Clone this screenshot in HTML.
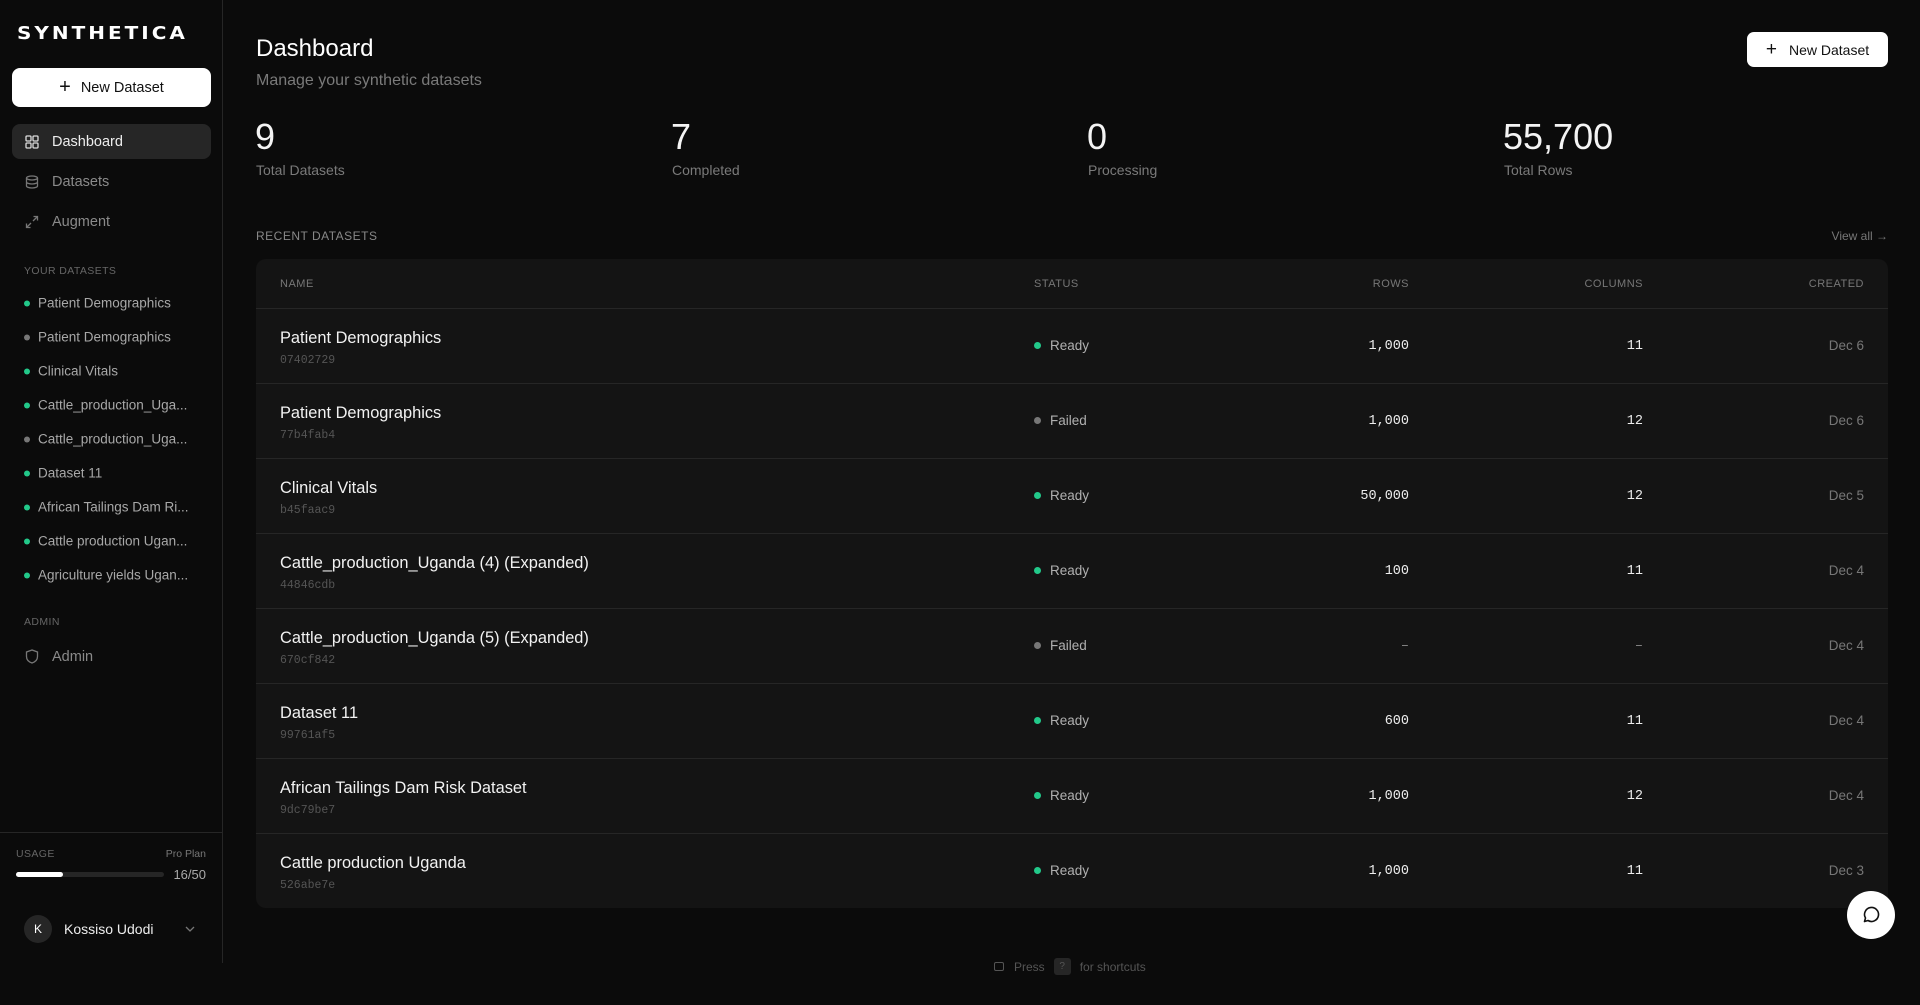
<!DOCTYPE html>
<html><head><meta charset="utf-8"><style>
*{box-sizing:border-box;margin:0;padding:0}
body{width:1920px;height:1005px;background:#0b0b0b;font-family:"Liberation Sans",sans-serif;color:#fff;position:relative;overflow:hidden}
.a{position:absolute;white-space:nowrap}
.sb{position:absolute;left:0;top:0;width:223px;height:963px;border-right:1px solid #262626}
.nav{position:absolute;left:12px;width:199px;height:35px;border-radius:8px;display:flex;align-items:center;padding-left:13px;font-size:14.5px;color:#8a8a8a}
.nav svg{margin-right:13px}
.ds{position:absolute;left:24px;font-size:13.5px;color:#a8a8a8;display:flex;align-items:center;transform:translateY(-50%)}
.dot{width:6px;height:6px;border-radius:50%;background:#22c98a;margin-right:8px}
.g{background:#777}
.lbl{font-size:10.5px;color:#666;letter-spacing:.4px}
.num{font-size:36px;color:#f4f4f4}
.sl{font-size:14px;color:#7a7a7a}
.tbl{position:absolute;left:256px;top:259px;width:1632px;height:649px;background:#141414;border-radius:10px;overflow:hidden}
.row{position:absolute;left:0;width:100%;height:75px;border-top:1px solid #262626}
.nm{position:absolute;left:24px;top:20px;font-size:16.4px;color:#f2f2f2}
.hs{position:absolute;left:24px;top:45px;font-size:11.5px;color:#555;font-family:"Liberation Mono",monospace}
.st{position:absolute;left:778px;top:29px;font-size:13.5px;color:#b0b0b0;display:flex;align-items:center}
.st .dot{width:7px;height:7px;margin-right:9px}
.r{position:absolute;right:479px;top:30px;font-family:"Liberation Mono",monospace;font-size:13.5px;color:#eee}
.c{position:absolute;right:245px;top:30px;font-family:"Liberation Mono",monospace;font-size:13.5px;color:#eee}
.d{position:absolute;right:24px;top:29px;font-size:13.5px;color:#777}
.th{position:absolute;top:19px;font-size:11px;color:#777;letter-spacing:.5px}
</style></head><body>
<div class="sb">
<div class="a" style="left:17px;top:22px;font-size:20px;font-weight:bold;letter-spacing:3px;font-family:'DejaVu Sans','Liberation Sans',sans-serif;transform:scaleY(0.9);transform-origin:left top">SYNTHETICA</div>
<div class="a" style="left:12px;top:68px;width:199px;height:39px;background:#fff;border-radius:8px;color:#111;font-size:14.5px;display:flex;align-items:center;justify-content:center"><span style="font-size:20px;margin-right:10px;font-weight:300">+</span>New Dataset</div>
<div class="nav" style="top:124px;background:#262626;color:#eee"><svg width="14" height="14" viewBox="0 0 14 14" fill="none" stroke="#ddd" stroke-width="1.3"><rect x="1" y="1" width="5" height="5" rx="1"/><rect x="8" y="1" width="5" height="5" rx="1"/><rect x="1" y="8" width="5" height="5" rx="1"/><rect x="8" y="8" width="5" height="5" rx="1"/></svg>Dashboard</div>
<div class="nav" style="top:164px"><svg width="14" height="14" viewBox="0 0 14 14" fill="none" stroke="#777" stroke-width="1.3"><ellipse cx="7" cy="3" rx="5.5" ry="2"/><path d="M1.5 3v8c0 1.1 2.5 2 5.5 2s5.5-.9 5.5-2V3M1.5 7c0 1.1 2.5 2 5.5 2s5.5-.9 5.5-2"/></svg>Datasets</div>
<div class="nav" style="top:204px"><svg width="14" height="14" viewBox="0 0 14 14" fill="none" stroke="#777" stroke-width="1.3"><path d="M8.5 1.5h4v4M12.5 1.5L8 6M5.5 12.5h-4v-4M1.5 12.5L6 8"/></svg>Augment</div>
<div class="a lbl" style="left:24px;top:265px">YOUR DATASETS</div>
<div class="ds" style="top:303px"><span class="dot"></span>Patient Demographics</div>
<div class="ds" style="top:337px"><span class="dot g"></span>Patient Demographics</div>
<div class="ds" style="top:371px"><span class="dot"></span>Clinical Vitals</div>
<div class="ds" style="top:405px"><span class="dot"></span>Cattle_production_Uga...</div>
<div class="ds" style="top:439px"><span class="dot g"></span>Cattle_production_Uga...</div>
<div class="ds" style="top:473px"><span class="dot"></span>Dataset 11</div>
<div class="ds" style="top:507px"><span class="dot"></span>African Tailings Dam Ri...</div>
<div class="ds" style="top:541px"><span class="dot"></span>Cattle production Ugan...</div>
<div class="ds" style="top:575px"><span class="dot"></span>Agriculture yields Ugan...</div>
<div class="a lbl" style="left:24px;top:616px">ADMIN</div>
<div class="nav" style="top:639px"><svg width="14" height="15" viewBox="0 0 14 15" fill="none" stroke="#777" stroke-width="1.3"><path d="M7 1L1.5 3v4.5C1.5 11 4 13 7 14c3-1 5.5-3 5.5-6.5V3z"/></svg>Admin</div>
<div class="a" style="left:0;top:832px;width:223px;border-top:1px solid #262626"></div>
<div class="a lbl" style="left:16px;top:848px">USAGE</div>
<div class="a" style="right:16px;top:848px;font-size:10.5px;color:#777">Pro Plan</div>
<div class="a" style="left:16px;top:872px;width:148px;height:5px;border-radius:3px;background:#262626"><div style="width:47px;height:5px;border-radius:3px;background:#fff"></div></div>
<div class="a" style="right:16px;top:867px;font-size:13px;color:#aaa">16/50</div>
<div class="a" style="left:24px;top:915px;width:28px;height:28px;border-radius:50%;background:#262626;font-size:12px;display:flex;align-items:center;justify-content:center">K</div>
<div class="a" style="left:64px;top:921px;font-size:14px;color:#eee">Kossiso Udodi</div>
<svg class="a" style="left:185px;top:925px" width="10" height="8" viewBox="0 0 10 8" fill="none" stroke="#777" stroke-width="1.3"><path d="M1 2l4 4 4-4"/></svg>
</div>

<div class="a" style="left:256px;top:35px;font-size:24px">Dashboard</div>
<div class="a" style="left:256px;top:72px;font-size:16px;color:#7a7a7a">Manage your synthetic datasets</div>
<div class="a" style="left:1747px;top:32px;width:141px;height:35px;background:#fff;border-radius:7px;color:#111;font-size:14px;display:flex;align-items:center;justify-content:center"><span style="font-size:19px;margin-right:12px;font-weight:300">+</span>New Dataset</div>

<div class="a num" style="left:255px;top:116px">9</div><div class="a sl" style="left:256px;top:162px">Total Datasets</div>
<div class="a num" style="left:671px;top:116px">7</div><div class="a sl" style="left:672px;top:162px">Completed</div>
<div class="a num" style="left:1087px;top:116px">0</div><div class="a sl" style="left:1088px;top:162px">Processing</div>
<div class="a num" style="left:1503px;top:116px">55,700</div><div class="a sl" style="left:1504px;top:162px">Total Rows</div>

<div class="a" style="left:256px;top:229px;font-size:12px;color:#888;letter-spacing:.5px">RECENT DATASETS</div>
<div class="a" style="right:32px;top:229px;font-size:12px;color:#777">View all →</div>

<div class="tbl">
<div class="th" style="left:24px">NAME</div><div class="th" style="left:778px">STATUS</div><div class="th" style="right:479px">ROWS</div><div class="th" style="right:245px">COLUMNS</div><div class="th" style="right:24px">CREATED</div>
<div class="row" style="top:49px"><div class="nm">Patient Demographics</div><div class="hs">07402729</div><div class="st"><span class="dot"></span>Ready</div><div class="r">1,000</div><div class="c">11</div><div class="d">Dec 6</div></div>
<div class="row" style="top:124px"><div class="nm">Patient Demographics</div><div class="hs">77b4fab4</div><div class="st"><span class="dot g"></span>Failed</div><div class="r">1,000</div><div class="c">12</div><div class="d">Dec 6</div></div>
<div class="row" style="top:199px"><div class="nm">Clinical Vitals</div><div class="hs">b45faac9</div><div class="st"><span class="dot"></span>Ready</div><div class="r">50,000</div><div class="c">12</div><div class="d">Dec 5</div></div>
<div class="row" style="top:274px"><div class="nm">Cattle_production_Uganda (4) (Expanded)</div><div class="hs">44846cdb</div><div class="st"><span class="dot"></span>Ready</div><div class="r">100</div><div class="c">11</div><div class="d">Dec 4</div></div>
<div class="row" style="top:349px"><div class="nm">Cattle_production_Uganda (5) (Expanded)</div><div class="hs">670cf842</div><div class="st"><span class="dot g"></span>Failed</div><div class="r" style="color:#888">–</div><div class="c" style="color:#888">–</div><div class="d">Dec 4</div></div>
<div class="row" style="top:424px"><div class="nm">Dataset 11</div><div class="hs">99761af5</div><div class="st"><span class="dot"></span>Ready</div><div class="r">600</div><div class="c">11</div><div class="d">Dec 4</div></div>
<div class="row" style="top:499px"><div class="nm">African Tailings Dam Risk Dataset</div><div class="hs">9dc79be7</div><div class="st"><span class="dot"></span>Ready</div><div class="r">1,000</div><div class="c">12</div><div class="d">Dec 4</div></div>
<div class="row" style="top:574px"><div class="nm">Cattle production Uganda</div><div class="hs">526abe7e</div><div class="st"><span class="dot"></span>Ready</div><div class="r">1,000</div><div class="c">11</div><div class="d">Dec 3</div></div>
</div>

<div class="a" style="left:994px;top:958px;font-size:12px;color:#555;display:flex;align-items:center"><span style="width:10px;height:9px;border:1.3px solid #555;border-radius:2px;margin-right:10px"></span>Press<span style="background:#262626;border-radius:3px;width:17px;height:17px;display:inline-flex;align-items:center;justify-content:center;margin:0 9px;font-size:10px">?</span>for shortcuts</div>

<div class="a" style="left:1847px;top:891px;width:48px;height:48px;border-radius:50%;background:#fff;display:flex;align-items:center;justify-content:center"><svg width="20" height="20" viewBox="0 0 20 20" fill="none" stroke="#111" stroke-width="1.6" stroke-linejoin="round"><path d="M3.5 16.5l1-3.5A7 7 0 1 1 7 15.5z"/></svg></div>
</body></html>
